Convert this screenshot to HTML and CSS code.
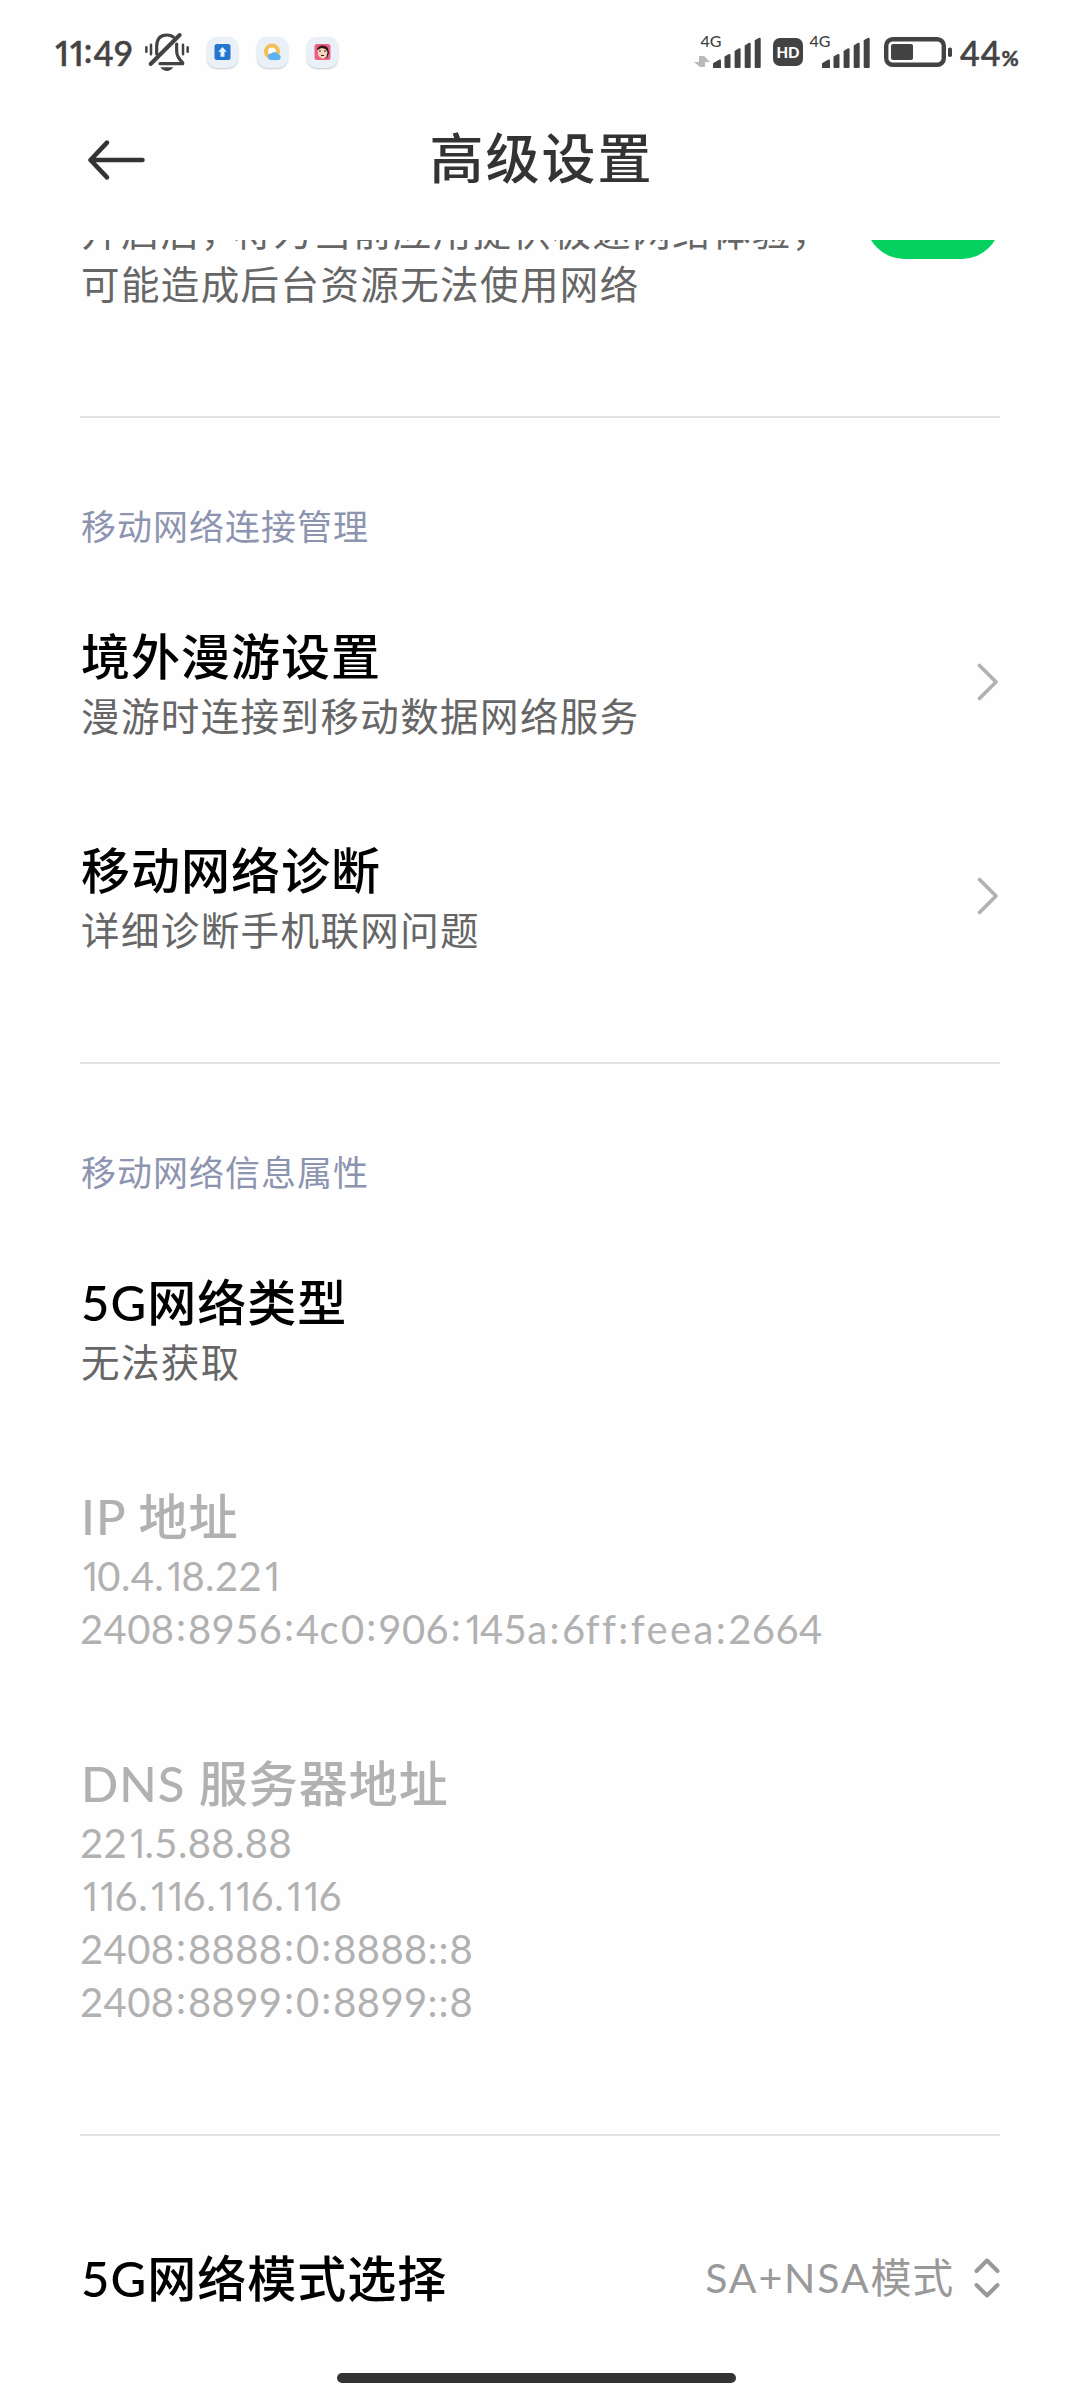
FILE: index.html
```html
<!DOCTYPE html>
<html lang="zh-CN">
<head>
<meta charset="utf-8">
<title>高级设置</title>
<link rel="stylesheet" href="styles.css">
</head>
<body>
<div class="screen">
  <div class="status">
    <div class="status-left">
      <span class="clock"><i>1</i><i>1</i><b>:</b>49</span>
      <svg class="bell" width="46" height="40" viewBox="312 38 138 120" fill="none" stroke="#434343" stroke-width="9.5" stroke-linecap="round" stroke-linejoin="round">
        <path d="M350 104V82C350 56 364 47 381 47C389 47 395 49 400 53M410 74V96C410 110 417 120 428 130V133H360"/>
        <path d="M332 134L419 47" stroke-width="12"/>
        <path d="M319 84V97M333 76V105M429 76V105M443 84V97" stroke-width="7.5"/>
        <path d="M361 144H400C394 152 388 155 381 155C374 155 367 152 361 144Z" fill="#434343" stroke="none"/>
      </svg>
      <div class="apps">
        <svg class="app" width="31" height="31" viewBox="0 0 31 31"><rect x="7.500" y="7" width="16" height="16" rx="2.500" fill="#2375cf"/><path d="M15.500 10l4.300 4.800h-2.300v5h-4v-5h-2.300z" fill="#e4f3ff"/></svg>
        <svg class="app" width="31" height="31" viewBox="0 0 31 31"><circle cx="15" cy="14.500" r="6" fill="#fff" stroke="#f6bd57" stroke-width="4"/><path d="M13.500 23a3.300 3.300 0 0 1 .5-6.500a4.500 4.500 0 0 1 7.500 1a2.900 2.900 0 0 1 .5 5.500z" fill="#5bb4f1"/></svg>
        <svg class="app" width="31" height="31" viewBox="0 0 31 31"><rect x="7.500" y="7" width="16" height="16" rx="2.500" fill="#ee5f86"/><path d="M10 12c1-4 8-5 11-1l1 5-2 5h-6z" fill="#35171b"/><path d="M10.500 13l4-2 4 1 2 3-1 5-4 2-4-3z" fill="#f5d5bb"/><path d="M12 14h2M17 14h2M14 18.500h3" stroke="#35171b" stroke-width="1.200"/></svg>
      </div>
    </div>
    <div class="status-right">
      <svg width="68" height="46" viewBox="694 29 68 46" fill="#434343">
        <text class="net" x="700.500" y="47">4G</text>
        <path d="M699 56h3v11h-2l-6-5h5zM705 67h-3V56h2l6 6h-5z" fill="#b9b9b9"/>
        <path d="M713 67.700v-4.500l6-3.400q2-.8 2 1v6.900q0 .3-.5.300h-7zM724.500 56.500l4-2.200q2-.8 2 1V67q0 1-1 1h-4q-1 0-1-1zM734.600 51l4-2.400q2-.8 2 1V67q0 1-1 1h-4q-1 0-1-1zM744.700 45.500l4-2.400q2-.8 2 1V67q0 1-1 1h-4q-1 0-1-1zM754.700 40.300l4-2.400q2-.8 2 1V67q0 1-1 1h-4q-1 0-1-1z"/>
      </svg>
      <span class="hd">HD</span>
      <svg width="62" height="46" viewBox="809 29 62 46" fill="#434343">
        <text class="net" x="809.500" y="47">4G</text>
        <path transform="translate(109 0)" d="M713 67.700v-4.500l6-3.400q2-.8 2 1v6.900q0 .3-.5.300h-7zM724.500 56.500l4-2.200q2-.8 2 1V67q0 1-1 1h-4q-1 0-1-1zM734.600 51l4-2.400q2-.8 2 1V67q0 1-1 1h-4q-1 0-1-1zM744.700 45.500l4-2.400q2-.8 2 1V67q0 1-1 1h-4q-1 0-1-1zM754.700 40.300l4-2.400q2-.8 2 1V67q0 1-1 1h-4q-1 0-1-1z"/>
      </svg>
      <svg class="battery" width="69" height="30" viewBox="884 37 69 30" fill="#434343">
        <rect x="886.200" y="39.200" width="57.600" height="25.600" rx="6.500" fill="none" stroke="#434343" stroke-width="4.400"/>
        <rect x="891" y="44" width="22" height="16" rx="2"/>
        <rect x="948" y="47.500" width="4" height="9.500" rx="1.800"/>
      </svg>
      <span class="level">44<small>%</small></span>
    </div>
  </div>

  <header class="header">
    <svg class="back" width="60" height="44" viewBox="0 0 60 44" fill="none" stroke="#333" stroke-width="4.600" stroke-linecap="round" stroke-linejoin="round"><path d="M55.500 22H3.500M20 4.700L3.500 22L20 39.300"/></svg>
    <h1 class="title">高级设置</h1>
  </header>

  <main class="content">
    <div class="item boost">
      <div class="desc">开启后<span class="comma">，</span>将为当前应用提供极速网络体验<span class="comma">，</span><br>可能造成后台资源无法使用网络</div>
      <span class="switch"></span>
    </div>

    <section class="group">
      <h2 class="group-title">移动网络连接管理</h2>
      <div class="item">
        <div><div class="name">境外漫游设置</div><div class="desc">漫游时连接到移动数据网络服务</div></div>
        <svg class="chevron" width="24" height="40" viewBox="0 0 24 40"><path d="M3.500 3.500L20 20L3.500 36.500"/></svg>
      </div>
      <div class="item">
        <div><div class="name">移动网络诊断</div><div class="desc">详细诊断手机联网问题</div></div>
        <svg class="chevron" width="24" height="40" viewBox="0 0 24 40"><path d="M3.500 3.500L20 20L3.500 36.500"/></svg>
      </div>
    </section>

    <section class="group">
      <h2 class="group-title">移动网络信息属性</h2>
      <div class="item">
        <div><div class="name">5G网络类型</div><div class="desc">无法获取</div></div>
      </div>
      <div class="item disabled">
        <div>
          <div class="name">IP 地址</div>
          <div class="desc"><i>1</i>0.4.<i>1</i>8.22<i>1</i></div>
          <div class="desc">2408<b>:</b>8956<b>:</b>4<span class="hex">c</span>0<b>:</b>906<b>:</b><i>1</i>45<span class="hex">a:</span>6<span class="hex">ff:feea:</span>2664</div>
        </div>
      </div>
      <div class="item disabled">
        <div>
          <div class="name">DNS 服务器地址</div>
          <div class="desc">22<i>1</i>.5.88.88</div>
          <div class="desc"><i>1</i><i>1</i>6.<i>1</i><i>1</i>6.<i>1</i><i>1</i>6.<i>1</i><i>1</i>6</div>
          <div class="desc">2408<b>:</b>8888<b>:</b>0<b>:</b>8888<span class="pair">::</span>8</div>
          <div class="desc">2408<b>:</b>8899<b>:</b>0<b>:</b>8899<span class="pair">::</span>8</div>
        </div>
      </div>
    </section>

    <section class="group last">
      <div class="item">
        <div class="name">5G网络模式选择</div>
        <div class="value"><span><span class="latin">SA+NSA</span>模式</span>
          <svg width="26" height="42" viewBox="0 0 26 42" fill="none" stroke="#999" stroke-width="4" stroke-linecap="round" stroke-linejoin="round"><path d="M2.500 14L13 3.500L23.500 14M2.500 28L13 38.500L23.500 28"/></svg>
        </div>
      </div>
    </section>
  </main>

  <div class="home-bar"></div>
</div>
</body>
</html>
```
FILE: styles.css
```css
* { box-sizing: border-box; }

body { margin: 0; background: #fefefe; }

.screen {
  position: relative;
  display: flex;
  flex-direction: column;
  width: 1080px;
  height: 2400px;
  overflow: hidden;
  background: #fefefe;
  font-family: Lato, "Noto Sans CJK SC", sans-serif;
  white-space: nowrap;
}

svg { display: block; flex: none; }
h1, h2 { margin: 0; font-weight: 500; }

/* Narrow figure one without a foot, and a raised colon between figures */
i { font-family: "Noto Sans", sans-serif; font-style: normal; letter-spacing: -0.14em; line-height: 1; }
b { padding: 0 0.04em; font-weight: inherit; line-height: 1; vertical-align: 0.07em; }

.status {
  display: flex;
  justify-content: space-between;
  height: 104px;
  padding: 0 58px 0 53px;
  color: #434343;
}
.status-left, .status-right { display: flex; align-items: center; height: 104px; }
.clock { width: 91px; font-size: 34px; font-weight: 500; -webkit-text-stroke: 0.5px #434343; }
.apps { display: flex; gap: 19px; margin-left: 17px; }
.app { border-radius: 10px; background: #e9f0f7; box-shadow: 0 1px 2px #c4c8cd; }
.net { font-size: 16px; font-weight: 500; }
.hd {
  width: 30px;
  height: 28px;
  margin: 0 6px 0 11px;
  border-radius: 7px;
  background: #434343;
  color: #fff;
  font-size: 15px;
  font-weight: 900;
  line-height: 28px;
  text-align: center;
}
.battery { margin-left: 13px; }
.level { width: 62px; margin-left: 7px; font-size: 34px; font-weight: 500; letter-spacing: 1px; -webkit-text-stroke: 0.5px #434343; }
.level small { font-size: 21px; font-weight: 700; letter-spacing: 0; }

.header { display: flex; align-items: center; height: 136px; padding: 0 78px 0 87px; }
.back { margin-top: -24px; }
.title {
  flex: 1;
  margin: -26px 66px 0 0;
  color: #333;
  font-size: 54px;
  letter-spacing: 2px;
  line-height: 80px;
  text-align: center;
}

.content { flex: 1; padding: 0 80px; overflow: hidden; }

.item { display: flex; align-items: center; justify-content: space-between; padding: 46.5px 0; }
.name { margin-left: 1px; color: #000; font-size: 49px; font-weight: 500; letter-spacing: 1px; line-height: 68px; }
.desc { height: 53px; margin-left: 1px; color: #666; font-size: 38.5px; letter-spacing: 1.4px; line-height: 53px; }
.comma { letter-spacing: -6px; }
.disabled .name { color: #b1b1b1; }
.disabled .desc { margin-left: 0; color: #b1b1b1; font-size: 40px; letter-spacing: 0.4px; }
.disabled .desc i { letter-spacing: -0.14em; }
.hex { letter-spacing: 2.4px; }
.pair { letter-spacing: 1px; }

.boost { align-items: flex-start; height: 176px; padding: 0; }
.boost .desc { margin-top: -35.5px; height: 106px; }
.switch { width: 134px; height: 76px; margin-top: -57px; border-radius: 38px; background: #04d160; }

.group { border-top: 2px solid #e3e3e3; padding: 82px 0 59px; }
.group-title {
  margin: 0 0 22px 1px;
  color: #8d94b0;
  font-size: 35px;
  font-weight: 400;
  letter-spacing: 1px;
  line-height: 53px;
}
.last { padding-top: 61px; }

.value { display: flex; align-items: center; gap: 20px; color: #999; font-size: 41px; letter-spacing: 0.7px; line-height: 68px; }
.latin { letter-spacing: 1.9px; }
.chevron { fill: none; stroke: #b1b1b1; stroke-width: 3.6px; stroke-linecap: round; stroke-linejoin: round; }

.home-bar {
  position: absolute;
  left: 337px;
  top: 2373px;
  width: 399px;
  height: 10px;
  border-radius: 5px;
  background: #333;
}
```
